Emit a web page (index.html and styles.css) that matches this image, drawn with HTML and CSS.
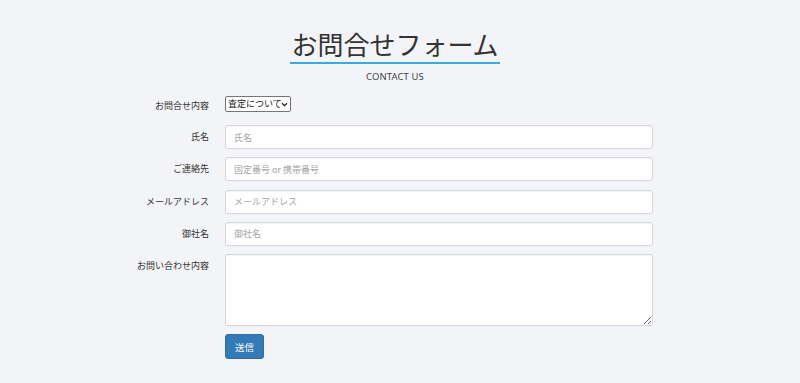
FILE: index.html
```html
<!DOCTYPE html>
<html lang="ja">
<head>
<meta charset="utf-8">
<title>お問合せフォーム</title>
<link rel="stylesheet" href="styles.css">
</head>
<body>
<header class="page-head">
  <h1 class="page-title">お問合せフォーム</h1>
  <p class="page-sub">CONTACT US</p>
</header>
<form class="contact-form">
  <div class="row row-select">
    <label class="lbl" for="kind">お問合せ内容</label>
    <div class="field">
      <span class="sel-wrap">
        <select id="kind" class="sel"><option>査定について</option></select>
        <svg class="sel-arrow" width="7" height="5" viewBox="0 0 7 5"><path d="M1 1.2 L3.5 3.7 L6 1.2" fill="none" stroke="#222" stroke-width="1.3"/></svg>
      </span>
    </div>
  </div>
  <div class="row">
    <label class="lbl" for="name">氏名</label>
    <div class="field"><input id="name" class="ctl" type="text" placeholder="氏名"></div>
  </div>
  <div class="row">
    <label class="lbl" for="tel">ご連絡先</label>
    <div class="field"><input id="tel" class="ctl" type="text" placeholder="固定番号 or 携帯番号"></div>
  </div>
  <div class="row">
    <label class="lbl" for="mail">メールアドレス</label>
    <div class="field"><input id="mail" class="ctl" type="text" placeholder="メールアドレス"></div>
  </div>
  <div class="row">
    <label class="lbl" for="company">御社名</label>
    <div class="field"><input id="company" class="ctl" type="text" placeholder="御社名"></div>
  </div>
  <div class="row">
    <label class="lbl lbl-top" for="body">お問い合わせ内容</label>
    <div class="field"><textarea id="body" class="ctl area"></textarea></div>
  </div>
  <div class="row">
    <span></span>
    <div class="field"><button type="button" class="btn">送信</button></div>
  </div>
</form>
</body>
</html>
```

FILE: styles.css
```css
html, body {
  margin: 0;
  padding: 0;
  background: #f3f4f8;
  color: #333;
  font-family: "Noto Sans", "Noto Sans CJK JP", sans-serif;
}

.page-head {
  text-align: center;
  padding-top: 28px;
  padding-right: 10px;
}

.page-title {
  display: inline-block;
  margin: 0;
  font-family: "Noto Sans CJK JP", sans-serif;
  font-weight: 400;
  font-size: 26px;
  line-height: 31px;
  padding: 0 1px 3px;
  border-bottom: 2px solid #3aaae0;
  color: #333;
}

.page-sub {
  margin: 6px 0 0;
  font-size: 9.5px;
  line-height: 14px;
  color: #444;
  letter-spacing: 0.1px;
}

.contact-form {
  display: grid;
  grid-template-columns: 209px 428px;
  column-gap: 16px;
  row-gap: 8.3px;
  margin-top: 12px;
}

.row {
  display: contents;
}

.lbl {
  text-align: right;
  font-family: "Noto Sans CJK JP", sans-serif;
  font-size: 9px;
  line-height: 24px;
  color: #333;
}

.row-select .lbl {
  line-height: 20.7px;
}

.row-select .field {
  height: 20.7px;
}

.field {
  display: flex;
  align-items: flex-start;
}

.sel-wrap {
  position: relative;
  display: block;
  height: 16px;
}

.sel {
  display: block;
  appearance: none;
  -webkit-appearance: none;
  box-sizing: border-box;
  font-family: "Noto Sans CJK JP", sans-serif;
  font-size: 9px;
  line-height: 14px;
  height: 16px;
  width: 66px;
  padding: 0 0 0 2px;
  border: 1px solid #767676;
  border-radius: 2px;
  background: #fff;
  color: #222;
  margin: 0;
}

.sel-arrow {
  position: absolute;
  right: 3px;
  top: 6px;
  pointer-events: none;
}

.ctl {
  box-sizing: border-box;
  width: 428px;
  height: 24px;
  padding: 0 8px;
  border: 1px solid #d4d6da;
  border-radius: 3px;
  background: #fff;
  font-family: "Noto Sans CJK JP", sans-serif;
  font-size: 9px;
  color: #333;
  box-shadow: inset 0 1px 1px rgba(0,0,0,0.04);
}

.ctl::placeholder {
  color: #a5a5a5;
}

.area {
  height: 72px;
  padding: 6px 8px;
  resize: vertical;
  border-radius: 2px;
}

.btn {
  width: 39px;
  height: 25px;
  margin-top: 0;
  border: 1px solid #2e6da4;
  border-radius: 3px;
  background: #337ab7;
  color: #fff;
  font-family: "Noto Sans CJK JP", sans-serif;
  font-size: 9.5px;
  padding: 0;
}
```
